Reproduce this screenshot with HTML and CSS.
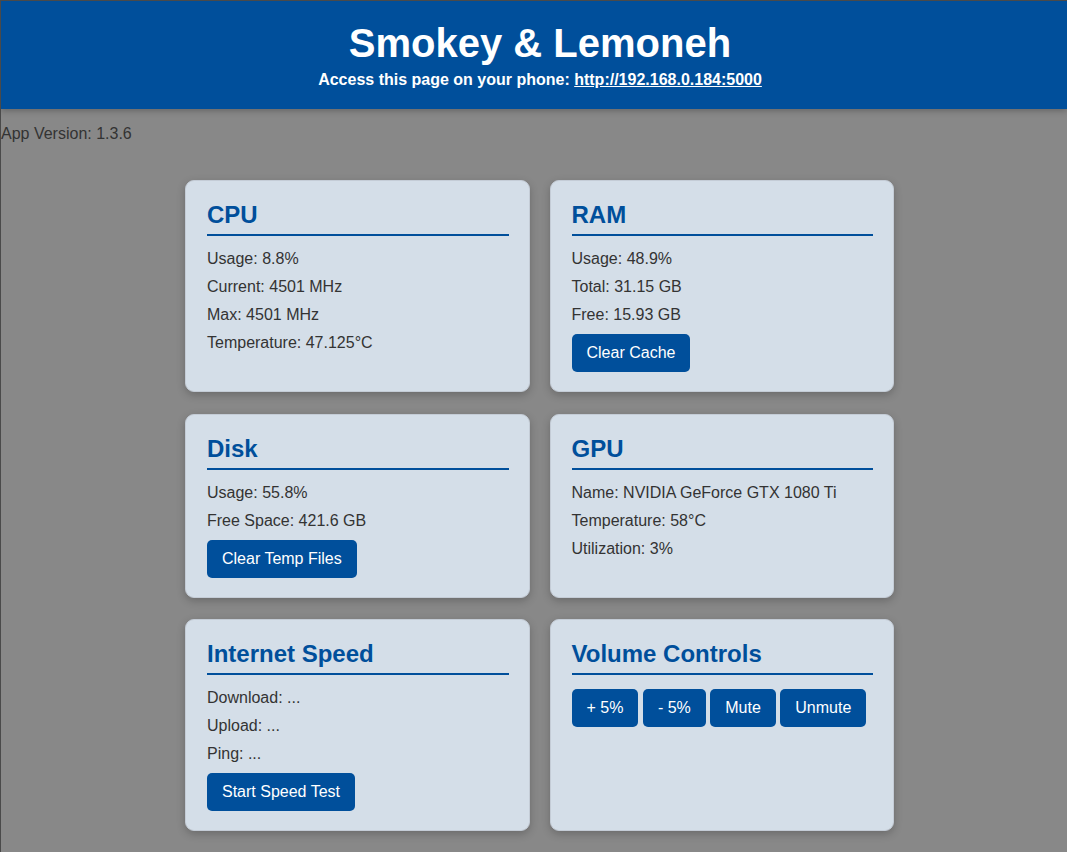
FILE: index.html
```html
<!DOCTYPE html>
<html lang="en">
<head>
<meta charset="utf-8">
<title>Smokey &amp; Lemoneh</title>
<link rel="stylesheet" href="styles.css">
</head>
<body>
<header class="header">
  <h1 class="title">Smokey &amp; Lemoneh</h1>
  <p class="subtitle">Access this page on your phone: <a class="link" href="#">http://192.168.0.184:5000</a></p>
</header>
<p class="version">App Version: 1.3.6</p>
<main class="grid">
  <section class="card">
    <h2 class="card-title">CPU</h2>
    <p class="stat">Usage: 8.8%</p>
    <p class="stat">Current: 4501 MHz</p>
    <p class="stat">Max: 4501 MHz</p>
    <p class="stat">Temperature: 47.125°C</p>
  </section>
  <section class="card">
    <h2 class="card-title">RAM</h2>
    <p class="stat">Usage: 48.9%</p>
    <p class="stat">Total: 31.15 GB</p>
    <p class="stat">Free: 15.93 GB</p>
    <div class="actions"><button class="btn">Clear Cache</button></div>
  </section>
  <section class="card">
    <h2 class="card-title">Disk</h2>
    <p class="stat">Usage: 55.8%</p>
    <p class="stat">Free Space: 421.6 GB</p>
    <div class="actions"><button class="btn">Clear Temp Files</button></div>
  </section>
  <section class="card">
    <h2 class="card-title">GPU</h2>
    <p class="stat">Name: NVIDIA GeForce GTX 1080 Ti</p>
    <p class="stat">Temperature: 58°C</p>
    <p class="stat">Utilization: 3%</p>
  </section>
  <section class="card">
    <h2 class="card-title">Internet Speed</h2>
    <p class="stat">Download: ...</p>
    <p class="stat">Upload: ...</p>
    <p class="stat">Ping: ...</p>
    <div class="actions"><button class="btn">Start Speed Test</button></div>
  </section>
  <section class="card">
    <h2 class="card-title">Volume Controls</h2>
    <div class="volume">
      <button class="btn">+ 5%</button>
      <button class="btn">- 5%</button>
      <button class="btn">Mute</button>
      <button class="btn">Unmute</button>
    </div>
  </section>
</main>
</body>
</html>
```

FILE: styles.css
```css
html {
  background: #888888;
}
body {
  margin: 0;
  min-height: 851px;
  border-top: 1px solid #4a4a4a;
  border-left: 1px solid #4a4a4a;
  background: #888888;
  font-family: "Liberation Sans", Arial, sans-serif;
  font-size: 16px;
  color: #333333;
}
.header {
  background: #004f9b;
  color: #ffffff;
  text-align: center;
  padding: 19px 0 20px 12px;
  box-shadow: 0 2px 6px rgba(0, 0, 0, 0.25);
}
.title {
  margin: 0;
  font-size: 40px;
  line-height: 46px;
  font-weight: bold;
}
.subtitle {
  margin: 5px 0 0;
  font-weight: bold;
  font-size: 16px;
}
.link {
  color: #ffffff;
  text-decoration: underline;
}
.version {
  margin: 16px 0;
}
.grid {
  display: grid;
  grid-template-columns: 1fr 1fr;
  gap: 21.5px 20px;
  width: 709px;
  padding: 21px 0 20px 11px;
  margin: 0 auto;
}
.card {
  background: #d4dee8;
  border: 1px solid #c4ccd6;
  border-radius: 9px;
  padding: 20px 20px 19px 21px;
  box-shadow: 0 3px 8px rgba(0, 0, 0, 0.22);
}
.card-title {
  margin: 0 0 14px;
  padding-bottom: 5px;
  border-bottom: 2px solid #004f9b;
  color: #004f9b;
  font-size: 24px;
  line-height: 28px;
  font-weight: bold;
}
.stat {
  margin: 10px 0;
  line-height: 18px;
}
.actions {
  margin: 1px 0 0;
}
.volume {
  margin-top: 10px;
}
.btn {
  background: #004f9b;
  color: #ffffff;
  border: none;
  border-radius: 5px;
  padding: 10px 15px;
  font-family: "Liberation Sans", Arial, sans-serif;
  font-size: 16px;
  line-height: 18px;
  cursor: pointer;
}
```
